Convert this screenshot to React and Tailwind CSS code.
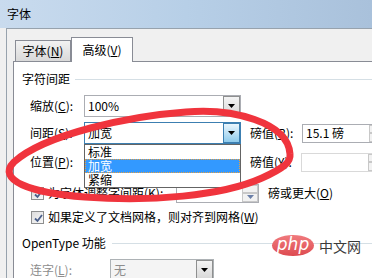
import React from "react";

const Tri = ({ color = "#000" }) => (
  <svg width="7" height="4" viewBox="0 0 7 4"><path d="M0 0H7L3.5 4Z" fill={color} /></svg>
);

function Select({ w, value, active, disabled, children }) {
  return (
    <div className={`relative flex h-[22px] ${w} border ${disabled ? "border-[#adb2b5] bg-[#f4f4f4] text-[#8d8d8d]" : active ? "border-[#3c7fb1] bg-white" : "border-[#abadb3] bg-white"}`}>
      <div className="flex-1 pl-[3px] flex items-center">{value}</div>
      <div className={`w-[17px] flex items-center justify-center border ${active ? "border-[#3c7fb1] bg-linear-to-b from-[#eaf6fd] to-[#8ecbec]" : "border-[#8e8f8f] bg-linear-to-b from-[#f4f4f4] to-[#d8d8d8]"}`}>
        <Tri />
      </div>
      {children}
    </div>
  );
}

function Spin({ w, value, disabled }) {
  return (
    <div className={`flex h-[19px] ${w} border ${disabled ? "border-[#d9d9d9]" : "border-[#abadb3]"} bg-white`}>
      <div className="flex-1 pl-[3px] flex items-center">{value}</div>
      <div className="w-[16px] flex flex-col">
        <div className="flex-1 border border-[#c8c8c8] bg-[#f2f2f2]" />
        <div className="flex-1 border border-[#c8c8c8] bg-[#f2f2f2] flex items-center justify-center"><Tri color="#6b7fa8" /></div>
      </div>
    </div>
  );
}

const Check = () => (
  <div className="w-[13px] h-[13px] border border-[#8e8f8f] bg-linear-to-br from-[#dcdcdc] to-[#fafafa] p-[1px]">
    <svg width="11" height="11" viewBox="0 0 11 11" className="block"><path d="M2 5.5L4.5 8L9 2" stroke="#4a5f8a" strokeWidth="1.8" fill="none" /></svg>
  </div>
);

export default function App() {
  return (
    <div className="relative w-[372px] h-[278px] overflow-hidden bg-[#f0f0f0] text-[12px] leading-[16px] text-black font-[family-name:'Noto_Sans_CJK_SC',sans-serif]">
      <div className="h-[28px] bg-linear-to-r from-[#c9dbee] via-[#b7cfe7] to-[#a9c1db] pl-[7px] pt-[6px]">字体</div>
      <div className="pl-[6px]">
        <div className="border-l border-t border-[#97a2ad] h-[260px] pl-[6px] pt-[8px]">
          <div className="flex items-end pl-[2px] h-[24px] relative z-10">
            <div className="w-[56px] h-[21px] border border-b-0 border-[#898c95] bg-linear-to-b from-[#f2f2f2] to-[#d9d9d9] flex items-center justify-center">字体(<u>N</u>)</div>
            <div className="w-[62px] h-[25px] mb-[-1px] border border-b-0 border-[#898c95] bg-white flex items-center justify-center">高级(<u>V</u>)</div>
          </div>
          <div className="w-[420px] h-[240px] border border-[#898c95] bg-white">
            <div className="mt-[9px] pl-[8px] flex items-center h-[16px]">
              <span>字符间距</span>
              <div className="ml-[5px] flex-1 h-px bg-[#d5dfe5]" />
            </div>
            <div className="mt-[8px] pl-[16px] flex items-center h-[22px]">
              <span className="w-[54px]">缩放(<u>C</u>):</span>
              <Select w="w-[157px]" value="100%" />
            </div>
            <div className="relative z-10 mt-[5px] pl-[16px] flex items-center h-[22px]">
              <span className="w-[54px]">间距(<u>S</u>):</span>
              <Select w="w-[157px]" value="加宽" active>
                <div className="absolute left-[-1px] top-[21px] w-[157px] border border-[#646464] bg-white flex flex-col">
                  <div className="h-[14px] pl-[3px] leading-[14px]">标准</div>
                  <div className="h-[14px] pl-[2px] leading-[12px] bg-[#3399ff] text-white border border-dotted border-[#e8a040]">加宽</div>
                  <div className="h-[14px] pl-[3px] leading-[14px]">紧缩</div>
                </div>
              </Select>
              <span className="ml-[9px] w-[52px]">磅值(<u>B</u>):</span>
              <Spin w="w-[84px]" value="15.1 磅" />
            </div>
            <div className="mt-[8px] pl-[16px] flex items-center h-[20px]">
              <span className="w-[54px]">位置(<u>P</u>):</span>
              <Select w="w-[157px]" value="" />
              <span className="ml-[9px] w-[51px]">磅值(<u>Y</u>):</span>
              <Spin w="w-[84px]" value="" disabled />
            </div>
            <div className="mt-[12px] pl-[17px] flex items-center h-[18px]">
              <div className="w-[145px] flex items-center gap-[4px]"><Check /><span>为字体调整字间距(<u>K</u>):</span></div>
              <Spin w="w-[83px]" value="" />
              <span className="ml-[9px]">磅或更大(<u>O</u>)</span>
            </div>
            <div className="mt-[7px] pl-[17px] flex items-center h-[16px] gap-[4px]">
              <Check /><span>如果定义了文档网格，则对齐到网格(<u>W</u>)</span>
            </div>
            <div className="mt-[10px] pl-[8px] flex items-center h-[16px]">
              <span>OpenType 功能</span>
              <div className="ml-[6px] flex-1 h-px bg-[#d5dfe5]" />
            </div>
            <div className="mt-[8px] pl-[16px] flex items-center h-[22px]">
              <span className="w-[80px] text-[#8d8d8d]">连字(<u>L</u>):</span>
              <Select w="w-[104px]" value="无" disabled />
            </div>
          </div>
        </div>
      </div>

      <div className="absolute left-[272px] top-[235px] flex items-center gap-[5px]">
        <div className="w-[42px] h-[21px] rounded-[50%] bg-linear-to-b from-[#f07a7e] to-[#dd4a50] flex items-center justify-center">
          <span className="text-white italic text-[17px] leading-[17px] font-[family-name:'DejaVu_Sans',sans-serif] -mt-[3px]">php</span>
        </div>
        <span className="text-[14px] leading-[16px] text-[#3a3a3a]">中文网</span>
      </div>

      <svg className="absolute inset-0 pointer-events-none z-20" width="372" height="278">
        <path d="M290 154 C288 122 232 108 186 112 C130 116 45 134 14 162 C-4 180 30 193 85 197 C150 202 222 196 262 178 C284 168 291 162 290 154 Z" fill="none" stroke="#f0343d" strokeWidth="7" strokeLinejoin="round" />
      </svg>
    </div>
  );
}
